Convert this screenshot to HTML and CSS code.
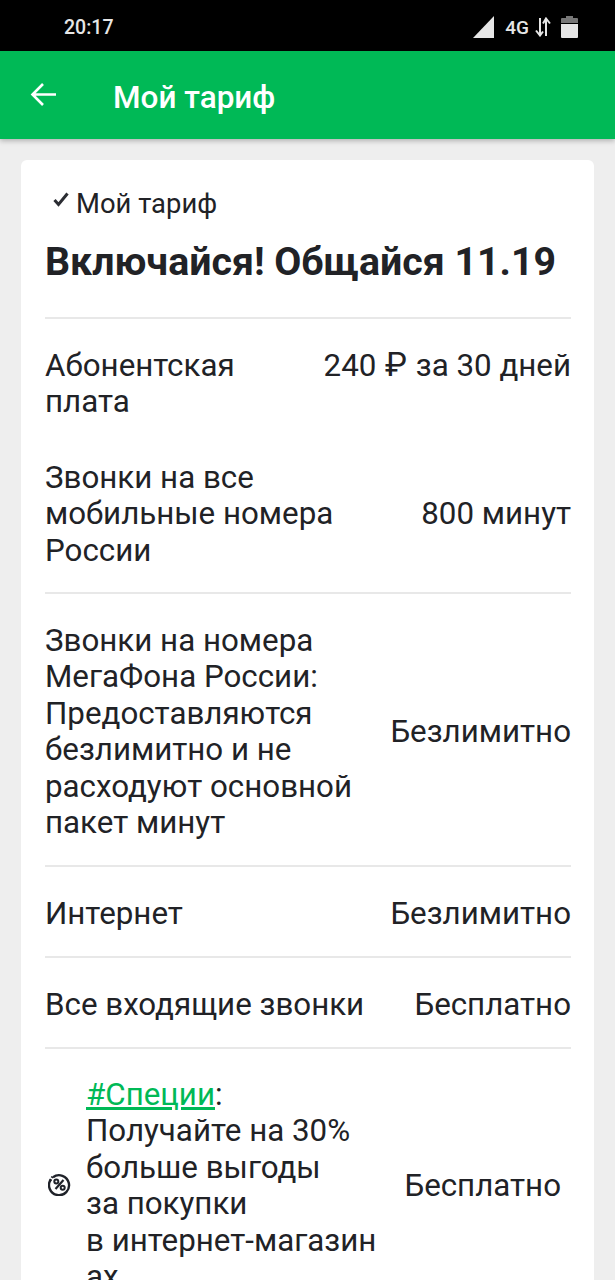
FILE: index.html
```html
<!DOCTYPE html>
<html lang="ru">
<head>
    <meta charset="UTF-8">
    <meta name="viewport" content="width=device-width, initial-scale=1.0">
    <title>Мой тариф</title>
    <link rel="stylesheet" href="styles.css">
</head>
<body>
    <div class="status-bar">
        <span class="time">20:17</span>
        <div class="status-icons">
            <svg class="signal" width="22" height="22" viewBox="0 0 22 22"><path d="M21 0V22H0Z" fill="#e6e6e6"/></svg>
            <span class="network">4G</span>
            <svg class="data" width="16" height="20" viewBox="0 0 16 20"><path d="M5 1V18M1 13.500L5 18.500L8 14.500M11 19V2M8 6.500L11 1.500L15 6.500" fill="none" stroke="#e6e6e6" stroke-width="2"/></svg>
            <svg class="battery" width="17" height="22" viewBox="0 0 17 22"><path d="M5 0H12V2H16Q17 2 17 3V7H0V3Q0 2 1 2H5Z" fill="#777"/><path d="M0 8H17V21Q17 22 16 22H1Q0 22 0 21Z" fill="#e6e6e6"/></svg>
        </div>
    </div>

    <header class="app-bar">
        <svg class="back" width="28" height="26" viewBox="0 0 28 26"><path d="M26 12.500H3M13 2L2.500 12.500L13 23" fill="none" stroke="#fff" stroke-width="2.600"/></svg>
        <h1>Мой тариф</h1>
    </header>

    <main class="card">
        <div class="label">
            <svg width="16" height="15" viewBox="0 0 16 15"><path d="M1.500 8L5.500 12.500L14.500 1.500" fill="none" stroke="#2b2d33" stroke-width="3"/></svg>
            <span>Мой тариф</span>
        </div>
        <h2>Включайся! Общайся 11.19</h2>

        <div class="row row-plain">
            <div class="name name-short">Абонентская плата</div>
            <div class="value">240 <span class="rub">₽</span> за 30 дней</div>
        </div>
        <div class="row row-next">
            <div class="name">Звонки на все мобильные номера России</div>
            <div class="value">800 минут</div>
        </div>
        <div class="row">
            <div class="name">Звонки на номера МегаФона России: Предоставляются безлимитно и не расходуют основной пакет минут</div>
            <div class="value">Безлимитно</div>
        </div>
        <div class="row">
            <div class="name">Интернет</div>
            <div class="value">Безлимитно</div>
        </div>
        <div class="row row-before-last">
            <div class="name">Все входящие звонки</div>
            <div class="value">Бесплатно</div>
        </div>
        <div class="row row-last">
            <svg class="percent" width="23" height="23" viewBox="0 0 23 23">
                <path d="M5 4.200A10 10 0 1 1 2.800 6.500" fill="none" stroke="#1f2229" stroke-width="2.400"/>
                <path d="M2.300 7.500L4.500 3.600" fill="none" stroke="#1f2229" stroke-width="2.400" stroke-dasharray="1.500 1.500"/>
                <circle cx="8.300" cy="8.500" r="2" fill="none" stroke="#1f2229" stroke-width="2"/>
                <circle cx="14.700" cy="14.700" r="2" fill="none" stroke="#1f2229" stroke-width="2"/>
                <path d="M7.500 16L15.500 7" stroke="#1f2229" stroke-width="2.200"/>
            </svg>
            <div class="name"><a href="#">#Специи</a>:<br>Получайте на 30%<br>больше выгоды<br>за покупки<br>в интернет-магазин<br>ах</div>
            <div class="value">Бесплатно</div>
        </div>
    </main>
</body>
</html>
```

FILE: styles.css
```css
html, body {
    height: 1280px;
    overflow: hidden;
}
body {
    margin: 0;
    font-family: Roboto, "Liberation Sans", sans-serif;
    background-color: #eeeeee;
    color: #212226;
}
.status-bar {
    height: 51px;
    background: #000;
    display: flex;
    align-items: center;
    justify-content: space-between;
    padding: 3px 37px 0 64px;
    box-sizing: border-box;
    color: #e6e6e6;
}
.time {
    font-size: 19.500px;
    font-weight: 500;
}
.status-icons {
    display: flex;
    align-items: center;
}
.network {
    font-size: 19px;
    font-weight: 500;
    margin-left: 10px;
}
.data {
    margin-left: 6px;
}
.battery {
    margin-left: 10px;
}
.app-bar {
    height: 88px;
    background: #00b956;
    display: flex;
    align-items: center;
    padding-left: 30px;
    box-shadow: 0 2px 5px rgba(0,0,0,0.25);
}
.app-bar h1 {
    margin: 5px 0 0 55px;
    color: #fff;
    font-size: 31.500px;
    font-weight: 500;
}
.card {
    background: #fff;
    margin: 21px 21px 0;
    padding: 26px 23px 0 24px;
    border-radius: 6px;
}
.label {
    display: flex;
    align-items: center;
    gap: 7px;
    padding-left: 8px;
    font-size: 27.400px;
    line-height: 36px;
}
.label svg {
    margin-top: -9px;
}
.card h2 {
    margin: 18px 0 0;
    padding-bottom: 33px;
    font-size: 39.300px;
    line-height: 44px;
    font-weight: 700;
    border-bottom: 2px solid #e8e8e8;
}
.row {
    display: flex;
    align-items: center;
    justify-content: space-between;
    gap: 20px;
    padding: 29px 0 23.800px;
    font-size: 31.300px;
    line-height: 36.400px;
    border-bottom: 2px solid #e8e8e8;
}
.row-plain {
    align-items: flex-start;
    padding-top: 28.500px;
    padding-bottom: 0;
    border-bottom: none;
}
.row-next {
    padding-top: 39.500px;
    padding-bottom: 23px;
}
.row-before-last {
    padding-bottom: 23px;
}
.row-last {
    padding-top: 28px;
    justify-content: flex-start;
    gap: 0;
    border-bottom: none;
}
.name {
    max-width: 330px;
}
.name-short {
    max-width: 230px;
}
.value {
    white-space: nowrap;
}
.rub {
    font-size: 33px;
    line-height: 1;
    margin: 0 1px;
}
.percent {
    flex: none;
    margin: 0 15px 3px 3px;
}
.row-last .value {
    margin-left: auto;
    margin-right: 10px;
}
.name a {
    color: #00b956;
}
```
